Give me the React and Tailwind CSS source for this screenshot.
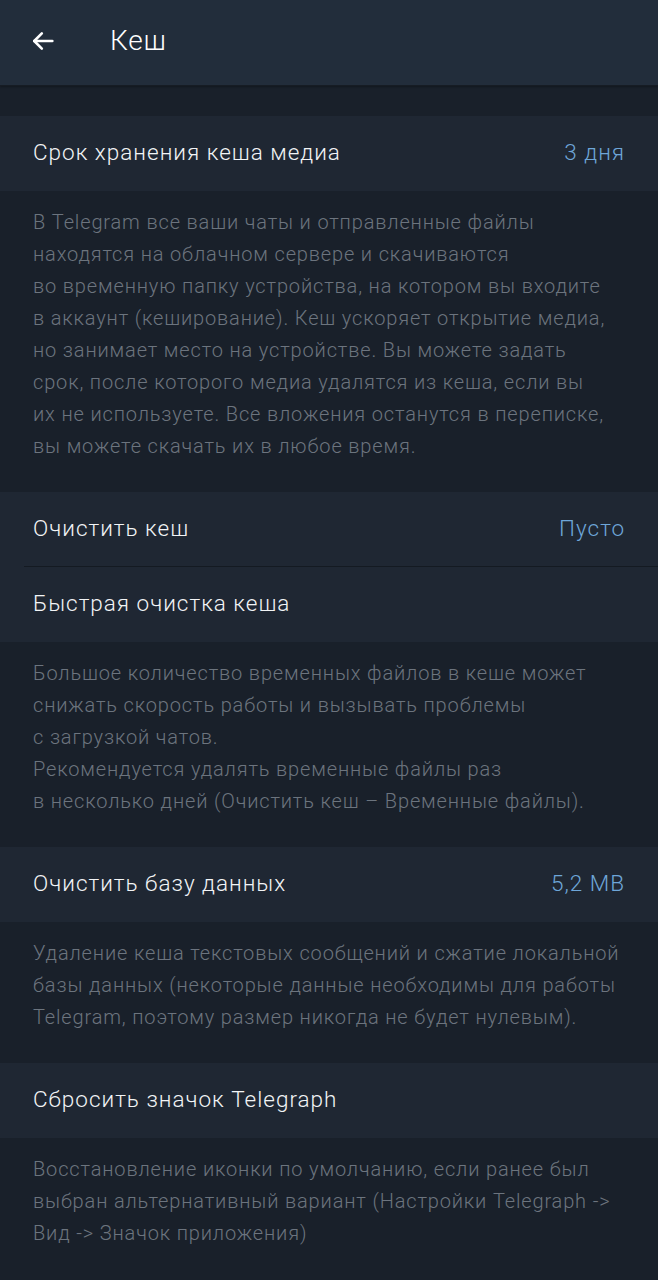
import React from 'react';

const Row = ({ label, value, divider }) => (
  <div className="relative flex h-[75px] items-center justify-between bg-[#1f2733] pb-[2px] pl-[33px] pr-[33px] text-[22.5px] font-light tracking-[1px]">
    <span className="text-[#f2f4f6]">{label}</span>
    {value && <span className="text-[#6ea6d8]">{value}</span>}
    {divider && <div className="absolute bottom-0 left-[24px] right-0 h-px bg-[#141a22]" />}
  </div>
);

const Note = ({ lines }) => (
  <div className="px-[33px] pb-[30px] pt-[15px] text-[20px] font-light leading-[32px] tracking-[0.85px] text-[#6c747e]">
    {lines.map((l, i) => (
      <div key={i}>{l}</div>
    ))}
  </div>
);

export default function App() {
  return (
    <div className="flex min-h-[1280px] w-[658px] flex-col bg-[#19202a] font-['Roboto',sans-serif]">
      <header className="flex h-[86px] items-center border-b border-[#161c24] bg-[#222d3b] pb-[3px] shadow-[0_1px_2px_rgba(0,0,0,0.3)]">
        <svg className="ml-[29px] h-[28px] w-[28px]" viewBox="0 0 24 24" fill="none" stroke="#ffffff" strokeWidth="2.2" strokeLinecap="round" strokeLinejoin="round">
          <path d="M20 12H4.5" />
          <path d="M11 5.5L4.5 12l6.5 6.5" />
        </svg>
        <h1 className="ml-[53px] text-[28px] font-light tracking-[0.8px] text-white">Кеш</h1>
      </header>

      <div className="h-[30px]" />
      <Row label="Срок хранения кеша медиа" value="3 дня" />
      <Note
        lines={[
          'В Telegram все ваши чаты и отправленные файлы',
          'находятся на облачном сервере и скачиваются',
          'во временную папку устройства, на котором вы входите',
          'в аккаунт (кеширование). Кеш ускоряет открытие медиа,',
          'но занимает место на устройстве. Вы можете задать',
          'срок, после которого медиа удалятся из кеша, если вы',
          'их не используете. Все вложения останутся в переписке,',
          'вы можете скачать их в любое время.',
        ]}
      />
      <Row label="Очистить кеш" value="Пусто" divider />
      <Row label="Быстрая очистка кеша" />
      <Note
        lines={[
          'Большое количество временных файлов в кеше может',
          'снижать скорость работы и вызывать проблемы',
          'с загрузкой чатов.',
          'Рекомендуется удалять временные файлы раз',
          'в несколько дней (Очистить кеш – Временные файлы).',
        ]}
      />
      <Row label="Очистить базу данных" value="5,2 MB" />
      <Note
        lines={[
          'Удаление кеша текстовых сообщений и сжатие локальной',
          'базы данных (некоторые данные необходимы для работы',
          'Telegram, поэтому размер никогда не будет нулевым).',
        ]}
      />
      <Row label="Сбросить значок Telegraph" />
      <Note
        lines={[
          'Восстановление иконки по умолчанию, если ранее был',
          'выбран альтернативный вариант (Настройки Telegraph ->',
          'Вид -> Значок приложения)',
        ]}
      />
    </div>
  );
}
